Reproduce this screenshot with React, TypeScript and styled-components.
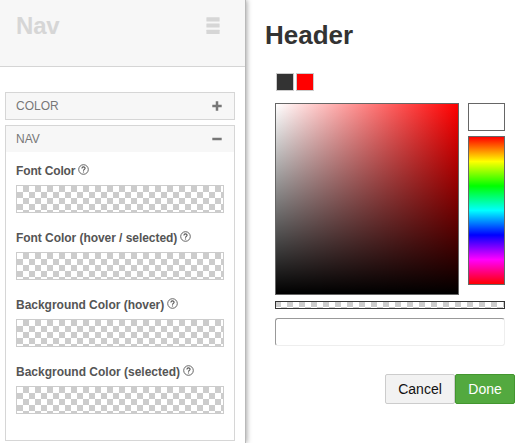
import React from "react";
import styled, { createGlobalStyle, css } from "styled-components";

const GlobalStyle = createGlobalStyle`
  *, *::before, *::after { box-sizing: border-box; }
  body {
    margin: 0;
    background: #fff;
    font-family: "Liberation Sans", Arial, sans-serif;
    overflow: hidden;
  }
`;

const checkers = css`
  background-color: #fff;
  background-image: conic-gradient(#fff 25%, #ccc 0 50%, #fff 0 75%, #ccc 0);
  background-size: 12px 12px;
`;

const Page = styled.div`
  display: flex;
  width: 523px;
  height: 443px;
`;

const Sidebar = styled.aside`
  flex: none;
  width: 246px;
  height: 443px;
  border-right: 1px solid #b9b9b9;
  box-shadow: 1px 0 5px rgba(0, 0, 0, 0.35);
`;

const SidebarHeader = styled.header`
  display: flex;
  justify-content: space-between;
  height: 67px;
  padding: 12px 25px 0 16px;
  background: #f7f7f7;
  border-bottom: 1px solid #d5d5d5;
`;

const SidebarTitle = styled.h2`
  margin: 0;
  font-size: 24px;
  line-height: 28px;
  letter-spacing: -0.2px;
  color: #d6d6d6;
`;

const MenuIcon = styled.svg`
  display: block;
  margin-top: 5px;
  fill: #d6d6d6;
`;

const Panels = styled.div`
  display: flex;
  flex-direction: column;
  gap: 5px;
  padding: 25px 10px 0 5px;
`;

const Panel = styled.section<{ $open?: boolean }>`
  height: ${(p) => (p.$open ? "316px" : "28px")};
  border: 1px solid #d6d6d6;
`;

const PanelHead = styled.div`
  display: flex;
  align-items: center;
  justify-content: space-between;
  height: 26px;
  padding: 0 12px 0 10px;
  background: #f7f7f7;
  font-size: 12px;
  color: #777;
`;

const Toggle = styled.svg`
  display: block;
  stroke: #777;
  stroke-width: 2.5;
`;

const Fields = styled.div`
  display: flex;
  flex-direction: column;
  gap: 17px;
  padding: 11px 10px 0;
`;

const Field = styled.div`
  height: 50px;
`;

const Label = styled.div<{ $tracking: number }>`
  display: flex;
  align-items: flex-start;
  gap: 3px;
  height: 22px;
  font-size: 12px;
  font-weight: bold;
  line-height: 16px;
  letter-spacing: ${(p) => p.$tracking}px;
  color: #555;
  white-space: nowrap;
`;

const HelpMark = styled.svg`
  display: block;
  margin-top: 1px;
  fill: none;
  stroke: #555;
`;

const ColorWell = styled.div`
  height: 28px;
  border: 1px solid #ccc;
  ${checkers}
  background-position: 6px 0;
`;

const Main = styled.main`
  flex: 1;
  padding: 20px 8px 0 19px;
`;

const Title = styled.h1`
  margin: 0;
  font-size: 26px;
  line-height: 30px;
  color: #333;
`;

const Presets = styled.div`
  display: flex;
  gap: 2px;
  padding: 23px 0 12px 11px;
`;

const Preset = styled.div<{ $color: string }>`
  width: 18px;
  height: 18px;
  border: 1px solid #ccc;
  background: ${(p) => p.$color};
`;

const Picker = styled.div`
  display: flex;
  flex-direction: column;
  width: 230px;
  margin-left: 10px;
`;

const PickerTop = styled.div`
  display: flex;
  justify-content: space-between;
`;

const Spectrum = styled.div`
  width: 184px;
  height: 192px;
  border: 1px solid #666;
  background: linear-gradient(to top, #000, rgba(0, 0, 0, 0)),
    linear-gradient(to right, #fff, #f00);
`;

const PickerSide = styled.div`
  display: flex;
  flex-direction: column;
  gap: 5px;
  width: 37px;
`;

const Current = styled.div`
  height: 28px;
  border: 1px solid #666;
  background: #fff;
`;

const Hue = styled.div`
  height: 149px;
  border: 1px solid #666;
  background: linear-gradient(#f00, #ff0, #0f0, #0ff, #00f, #f0f, #f00);
`;

const Alpha = styled.div`
  height: 8px;
  margin-top: 6px;
  border: 1px solid #333;
  ${checkers}
  background-position: -1px -1px;
`;

const ColorInput = styled.input`
  width: 230px;
  height: 28px;
  margin: 9px 0 0;
  padding: 0 6px;
  border: 1px solid;
  border-color: #999 #eee #eee #999;
  border-radius: 3px;
  background: #fff;
  outline: none;
`;

const Actions = styled.div`
  display: flex;
  justify-content: flex-end;
  margin-top: 28px;
`;

const Button = styled.button<{ $primary?: boolean }>`
  width: ${(p) => (p.$primary ? "60px" : "70px")};
  height: 30px;
  padding: 0;
  border: 1px solid ${(p) => (p.$primary ? "#43962f" : "#ccc")};
  border-radius: 2px;
  background: ${(p) => (p.$primary ? "#53a93f" : "#f2f2f2")};
  color: ${(p) => (p.$primary ? "#fff" : "#111")};
  font: 14px "Liberation Sans", Arial, sans-serif;
`;

const HelpIcon = () => (
  <HelpMark width="11" height="11" viewBox="0 0 11 11">
    <circle cx="5.5" cy="5.5" r="4.8" strokeWidth="0.9" />
    <path d="M3.9 4.4C3.9 2.4 7.1 2.4 7.1 4.3C7.1 5.4 5.5 5.4 5.5 6.7M5.5 7.4V8.5" strokeWidth="1.1" />
  </HelpMark>
);

const fields = [
  { label: "Font Color", tracking: -0.13 },
  { label: "Font Color (hover / selected)", tracking: -0.05 },
  { label: "Background Color (hover)", tracking: -0.02 },
  { label: "Background Color (selected)", tracking: 0 },
];

export default function App() {
  return (
    <>
      <GlobalStyle />
      <Page>
        <Sidebar>
          <SidebarHeader>
            <SidebarTitle>Nav</SidebarTitle>
            <MenuIcon width="14" height="17" viewBox="0 0 14 17">
              <rect x="0.4" y="0.2" width="13.2" height="4.2" rx="0.5" />
              <rect x="0.4" y="6.4" width="13.2" height="4.2" rx="0.5" />
              <rect x="0.4" y="12.8" width="13.2" height="4.2" rx="0.5" />
            </MenuIcon>
          </SidebarHeader>
          <Panels>
            <Panel>
              <PanelHead>
                COLOR
                <Toggle width="10" height="10" viewBox="0 0 10 10">
                  <path d="M0.3 5H9.7M5 0.3V9.7" />
                </Toggle>
              </PanelHead>
            </Panel>
            <Panel $open>
              <PanelHead>
                NAV
                <Toggle width="10" height="10" viewBox="0 0 10 10">
                  <path d="M0.3 5H9.7" />
                </Toggle>
              </PanelHead>
              <Fields>
                {fields.map(({ label, tracking }) => (
                  <Field key={label}>
                    <Label $tracking={tracking}>
                      {label}
                      <HelpIcon />
                    </Label>
                    <ColorWell />
                  </Field>
                ))}
              </Fields>
            </Panel>
          </Panels>
        </Sidebar>
        <Main>
          <Title>Header</Title>
          <Presets>
            <Preset $color="#333" />
            <Preset $color="#f00" />
          </Presets>
          <Picker>
            <PickerTop>
              <Spectrum />
              <PickerSide>
                <Current />
                <Hue />
              </PickerSide>
            </PickerTop>
            <Alpha />
            <ColorInput aria-label="Color value" />
          </Picker>
          <Actions>
            <Button>Cancel</Button>
            <Button $primary>Done</Button>
          </Actions>
        </Main>
      </Page>
    </>
  );
}
